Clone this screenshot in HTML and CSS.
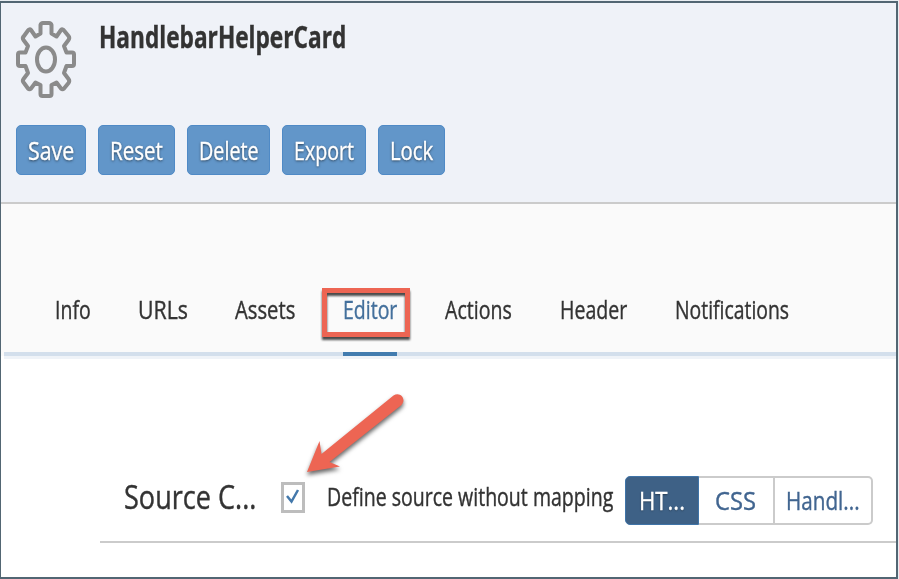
FILE: index.html
```html
<!DOCTYPE html>
<html lang="en">
<head>
<meta charset="utf-8">
<title>HandlebarHelperCard</title>
<link rel="stylesheet" href="styles.css">
</head>
<body>
<div class="window">
  <header class="header">
    <div class="identity">
      <svg class="gear" width="60" height="77" viewBox="0 0 60 77" fill="none" stroke="#8b8b8b" stroke-width="4" stroke-linejoin="round">
        <path d="M24.500 4Q25 2 27 2H33Q35 2 35.500 4V12.500L40.500 15.500L45 9Q46.500 7.500 48 9.500L52.500 15Q54 17 52.500 19L48 25L50.500 31.500H56Q58 31.500 58 33.500V43Q58 45 56 45H50.500L48 52L52.500 58Q54 60 52.500 62L48 67.500Q46.500 69 45 67.500L40.500 61.500L35.500 64V73Q35.500 75 33.500 75H26.500Q24.500 75 24.500 73V64L19.500 61.500L15 67.500Q13.500 69 12 67.500L8 62Q6 60 7.500 58L12 52L9.500 45H4Q2 45 2 43V33.500Q2 31.500 4 31.500H9.500L12 25L7.500 19Q6 17 8 15L12 9.500Q13.500 7.500 15 9L19.500 15.500L24.500 12.500Z"/>
        <ellipse cx="30" cy="38.500" rx="9" ry="12"/>
      </svg>
      <h1 class="title"><span class="fit" data-width="247">HandlebarHelperCard</span></h1>
    </div>
    <div class="toolbar">
      <button class="btn save"><span class="fit" data-width="46">Save</span></button>
      <button class="btn reset"><span class="fit" data-width="53">Reset</span></button>
      <button class="btn delete"><span class="fit" data-width="60">Delete</span></button>
      <button class="btn export"><span class="fit" data-width="60.5">Export</span></button>
      <button class="btn lock"><span class="fit" data-width="43">Lock</span></button>
    </div>
  </header>
  <nav class="tabs">
    <a class="tab info"><span class="fit" data-width="36">Info</span></a>
    <a class="tab urls"><span class="fit" data-width="50">URLs</span></a>
    <a class="tab assets"><span class="fit" data-width="60">Assets</span></a>
    <a class="tab editor"><span class="fit" data-width="54">Editor</span><i class="highlight"></i></a>
    <a class="tab actions"><span class="fit" data-width="67">Actions</span></a>
    <a class="tab head"><span class="fit" data-width="67">Header</span></a>
    <a class="tab notifications"><span class="fit" data-width="114">Notifications</span></a>
  </nav>
  <main class="content">
    <div class="row">
      <span class="section"><span class="fit" data-width="132">Source C...</span></span>
      <span class="checkbox"><svg width="18" height="25" viewBox="0 0 18 25" fill="none" stroke="#4378ab" stroke-width="2.500"><path d="M3 11L7.500 16.500L14 5"/></svg></span>
      <span class="option"><span class="fit" data-width="286">Define source without mapping</span></span>
      <div class="segments">
        <span class="segment active"><span class="fit" data-width="46">HT...</span></span>
        <span class="segment css"><span class="fit" data-width="41">CSS</span></span>
        <span class="segment handlebars"><span class="fit" data-width="74">Handl...</span></span>
      </div>
    </div>
    <svg class="arrow" width="110" height="100" viewBox="0 0 110 100">
      <path fill="#ed6553" d="M7 92L19.500 61L21.500 74L93.500 15.500C100 11 107 19 101.500 25L29.500 82L40 86.500Z"/>
    </svg>
  </main>
</div>
<script src="fit.js"></script>
</body>
</html>
```
FILE: styles.css
```css
* { box-sizing: border-box; }
body {
  margin: 0;
  background: #e9eef2;
  font-family: "Open Sans", "Noto Sans", sans-serif;
  font-size: 26px;
  color: #333;
}
.window {
  width: 898px;
  height: 578px;
  margin-top: 1px;
  border: 2px solid #526673;
  border-left-width: 1px;
  background: #fff;
  overflow: hidden;
}
.fit {
  display: inline-block;
  white-space: nowrap;
  transform-origin: 0 50%;
  -webkit-text-stroke: 0.4px currentColor;
}
.header {
  height: 201px;
  padding: 18px 15px 0;
  background: #eff2f8;
  border-bottom: 2px solid #cbcbcb;
}
.identity { display: flex; height: 104px; }
.gear { flex: none; }
.title {
  width: 260px;
  margin: 1px 0 0 23px;
  font-size: 30px;
  font-weight: 700;
  line-height: 29px;
}
.toolbar { display: flex; gap: 12px; }
.btn {
  flex: none;
  height: 50px;
  padding: 0 0 0 11px;
  border: 1px solid #4f8ac6;
  border-radius: 5px;
  background: #6296c9;
  color: #fff;
  font: inherit;
  line-height: 48px;
  text-align: left;
  text-shadow: 0 1px 3px rgba(0, 0, 0, 0.65);
  overflow: hidden;
}
.save { width: 70px; }
.reset { width: 77px; }
.delete { width: 83px; }
.export { width: 84px; }
.lock { width: 67px; }
.tabs {
  display: flex;
  height: 152px;
  margin-left: 3px;
  padding: 84px 0 0 51px;
  background: #fafafa;
  border-bottom: 4px solid #d3dfec;
  box-shadow: 0 3px 0 #eff3f8, -3px 0 0 #fafafa;
}
.tab {
  position: relative;
  flex: none;
  height: 68px;
  line-height: 43px;
}
.info { width: 83px; }
.urls { width: 97px; }
.assets { width: 108px; }
.editor {
  width: 54px;
  margin-right: 48px;
  color: #44709c;
  border-bottom: 4px solid #427caf;
}
.actions { width: 115px; }
.head { width: 115px; }
.highlight {
  position: absolute;
  left: -21px;
  top: 0;
  width: 88px;
  height: 49px;
  border: 5px solid #ed6553;
  filter: drop-shadow(0 3px 1px rgba(0, 0, 0, 0.7));
}
.content { position: relative; padding-left: 99px; }
.row {
  display: flex;
  height: 187px;
  padding: 120px 0 0 24px;
  border-bottom: 2px solid #cbcbcb;
}
.section {
  flex: none;
  width: 157px;
  font-size: 32px;
  line-height: 41px;
}
.checkbox {
  flex: none;
  width: 24px;
  height: 31px;
  margin: 6px 22px 0 0;
  border: 3px solid #bdbdbd;
}
.checkbox svg { display: block; }
.option {
  flex: none;
  width: 298px;
  font-size: 25px;
  line-height: 41px;
}
.segments { display: flex; height: 49px; color: #416590; }
.segment {
  flex: none;
  padding-left: 11px;
  border: 2px solid #cbcbcb;
  border-left: 0;
  line-height: 45px;
}
.active {
  width: 74px;
  padding-left: 13px;
  background: #3e6186;
  border: 1px solid #3f74a8;
  border-radius: 5px 0 0 5px;
  color: #fff;
  line-height: 47px;
  text-shadow: 0 1px 2px rgba(0, 0, 0, 0.4);
}
.css { width: 76px; padding-left: 16px; }
.handlebars { width: 98px; border-radius: 0 5px 5px 0; }
.arrow {
  position: absolute;
  left: 299px;
  top: 24px;
  filter: drop-shadow(0 3px 2px rgba(0, 0, 0, 0.6));
}
```
FILE: fit.js
```js
// Condense every label horizontally to its own width.
document.querySelectorAll(".fit").forEach(function (label) {
  var scale = Number(label.dataset.width) / label.offsetWidth;
  label.style.transform = "scaleX(" + scale + ")";
});
```
